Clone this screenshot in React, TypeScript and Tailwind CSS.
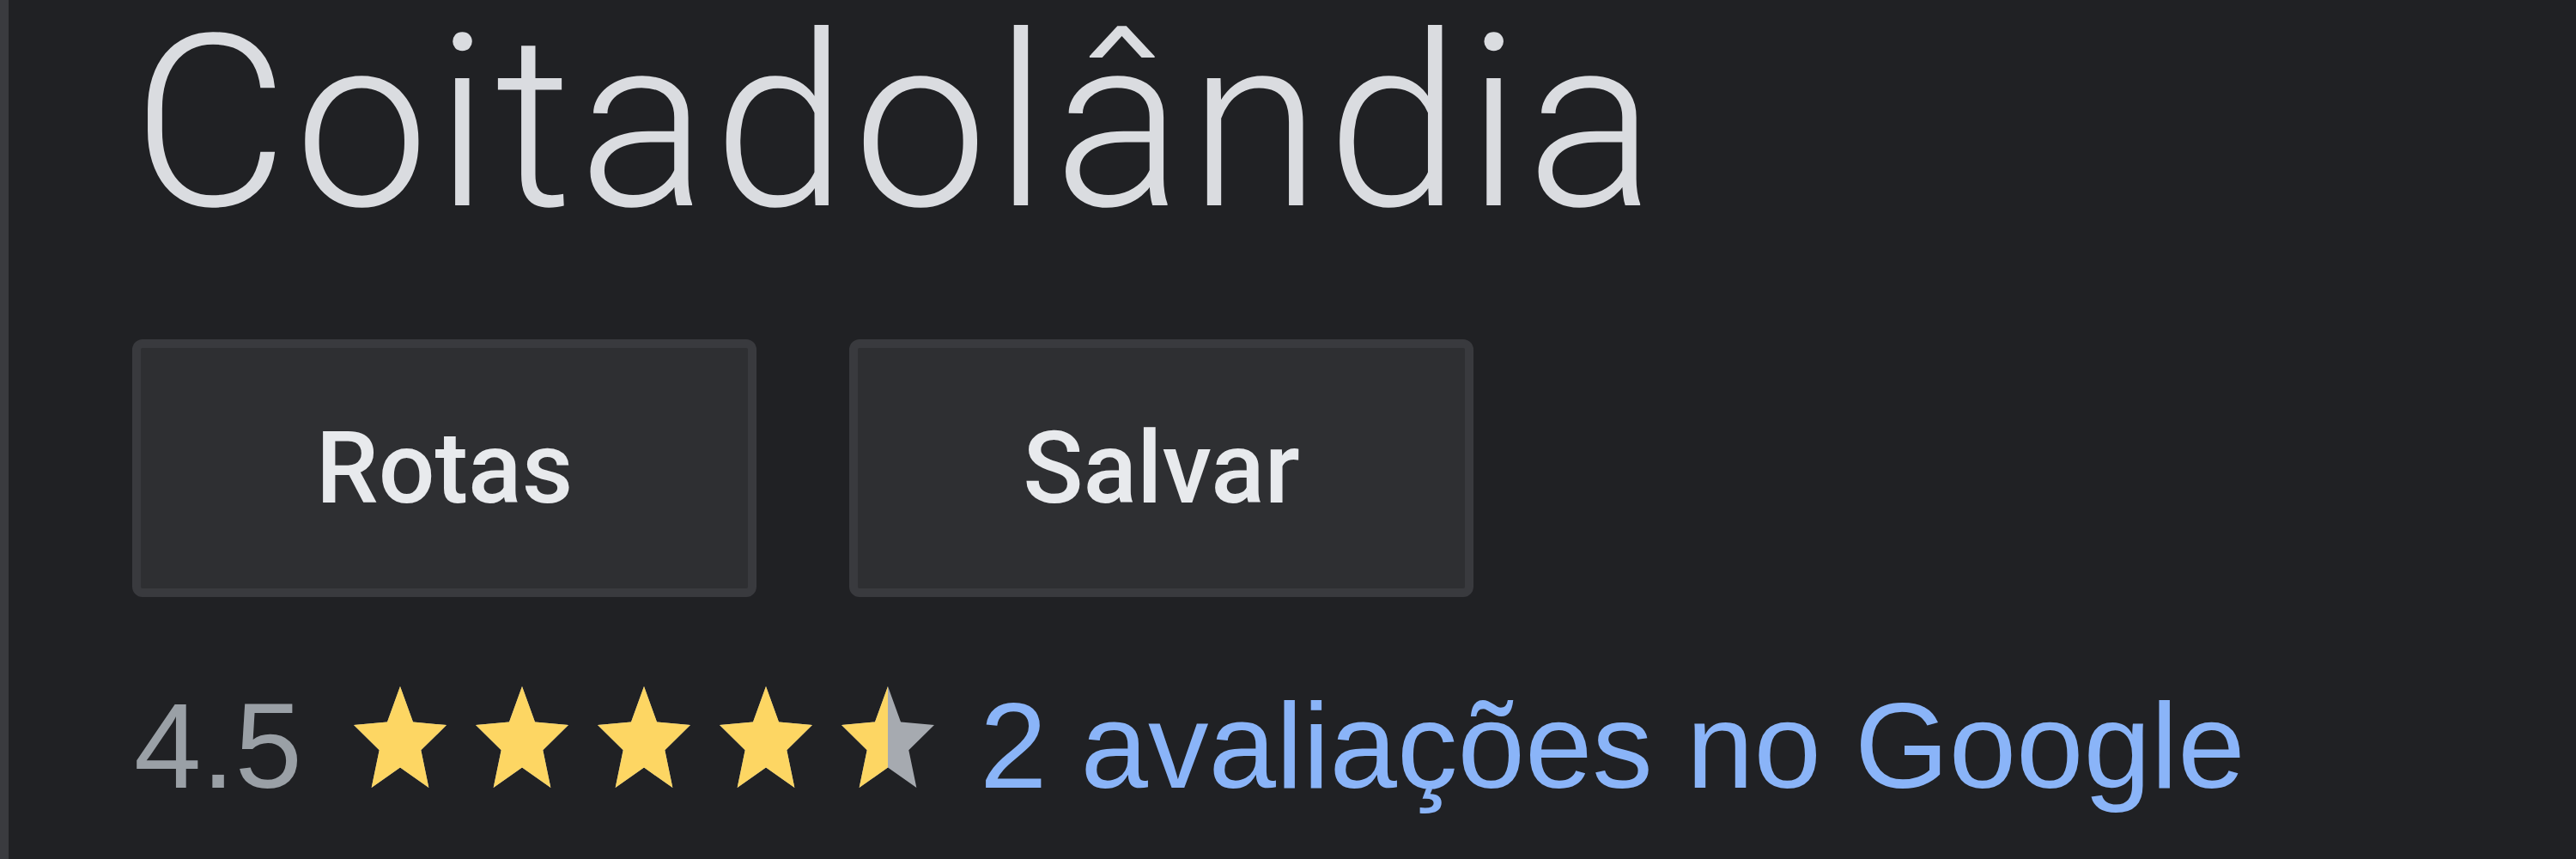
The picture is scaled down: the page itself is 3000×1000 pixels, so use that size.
import { useId } from 'react'

const STAR =
  'M50 0L63.23 31.8L97.55 34.55L71.4 56.95L79.39 90.45L50 72.5L20.61 90.45L28.6 56.95L2.45 34.55L36.77 31.8Z'

function Star({ fill = 1 }: { fill?: number }) {
  const id = useId().replace(/:/g, '')
  return (
    <svg viewBox="2.45 0 95.1 90.45" preserveAspectRatio="none" className="w-[108px] h-[118px] shrink-0">
      <defs>
        <clipPath id={`c${id}`}>
          <rect x="0" y="0" width={2.45 + 95.1 * fill} height="100" />
        </clipPath>
      </defs>
      <path d={STAR} fill="#a6aab0" />
      <path d={STAR} fill="#fdd663" clipPath={`url(#c${id})`} />
    </svg>
  )
}

export default function App() {
  return (
    <div className="w-full h-[1000px] bg-[#202124] flex overflow-hidden">
      <div className="w-[10px] shrink-0 bg-[#3a3b3f]" />
      <div className="pl-[144px] pt-[3px] flex flex-col">
        {/* Place name */}
        <h1
          className="text-[280px] leading-none tracking-[7px] font-light text-[#dadce0] whitespace-nowrap"
          style={{ fontFamily: 'Roboto, "Liberation Sans", sans-serif' }}
        >
          Coitadolândia
        </h1>

        {/* Actions */}
        <div className="mt-[112px] flex gap-[108px]">
          {['Rotas', 'Salvar'].map(label => (
            <button
              key={label}
              className="w-[727px] h-[300px] flex items-center justify-center bg-[#2e2f32] border-[10px] border-[#393a3e] rounded-[12px] text-[116px] font-medium text-[#e8eaed] leading-none"
              style={{ fontFamily: 'Roboto, "Liberation Sans", sans-serif' }}
            >
              {label}
            </button>
          ))}
        </div>

        {/* Rating */}
        <div
          className="mt-[103px] flex items-start text-[141px] leading-none whitespace-nowrap"
          style={{ fontFamily: '"Liberation Sans", Arial, sans-serif' }}
        >
          <span className="text-[#9aa0a6] ml-[2px]">4.5</span>
          <div className="ml-[60px] mt-[1px] flex gap-[34px]">
            <Star />
            <Star />
            <Star />
            <Star />
            <Star fill={0.5} />
          </div>
          <span className="ml-[53px] text-[#8ab4f8]">2 avaliações no Google</span>
        </div>
      </div>
    </div>
  )
}
